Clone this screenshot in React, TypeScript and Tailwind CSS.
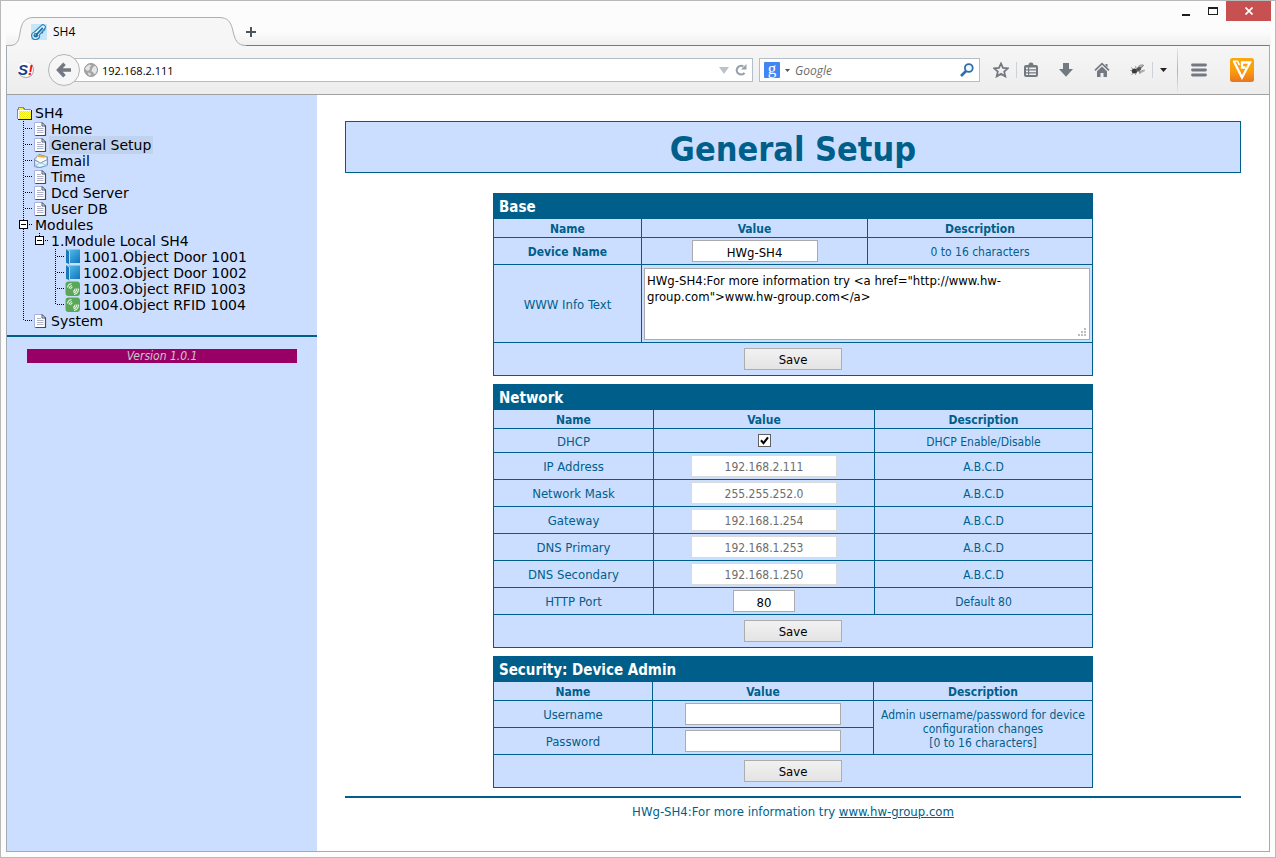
import type { ReactNode } from 'react'

/* ---------- browser chrome icons ---------- */

function ThermometerIcon() {
  return (
    <svg className="h-4 w-4 shrink-0" viewBox="0 0 16 16" aria-hidden="true">
      <rect width="16" height="16" fill="#c4e6f8" />
      <path d="M3.3 8 10.200 1.700a2.300 2.300 0 0 1 3.600 2.900L8.400 10.800a3.900 3.900 0 1 1-5.100-2.800Z" fill="#e3f3fc" stroke="#2b86bd" strokeWidth="1.200" />
      <path d="M5 11 11.800 3.800" stroke="#1b6ea6" strokeWidth="1.800" />
      <circle cx="4.800" cy="11.200" r="2.300" fill="#1b6ea6" />
      <circle cx="4.300" cy="10.700" r=".8" fill="#8cc8ea" />
      <path d="m11 9.500 1-2.500M13 6.500l1-1.500" stroke="#2b86bd" strokeWidth="1.400" />
    </svg>
  )
}

function SeznamIcon() {
  return (
    <span className="flex h-4 w-4 shrink-0 items-center justify-center rounded-full border-b border-r border-[#a8a8a8] bg-white font-['Liberation_Sans',Arial,sans-serif] text-[15px] font-bold italic leading-4">
      <span className="text-[#173f86]">S</span>
      <span className="text-[#f0101e]">!</span>
    </span>
  )
}

function GlobeIcon() {
  return (
    <svg className="h-3.5 w-3.5 shrink-0" viewBox="0 0 14 14" aria-hidden="true">
      <circle cx="7" cy="7" r="6.500" fill="#a6a6a6" stroke="#9a9a9a" strokeWidth="1" />
      <path d="M1 5.500 3 3l3-1.500 1 1.500-1.500 1.500.5 1.500L4 8 2 7ZM8 6l1.500-2.500 2-.5 1.500 3-.5 3-2 2.500L9 9 7.500 8.500Z" fill="#e6e6e6" />
      <path d="m4 9.500 2.500.5.5 2-1 1-2-1.500Z" fill="#d6d6d6" />
    </svg>
  )
}

function BackIcon() {
  return (
    <svg className="h-4 w-4" viewBox="0 0 16 16" aria-hidden="true">
      <path d="M8.500 1.800 2.600 8l5.900 6.200M3.500 8H15" fill="none" stroke="#737980" strokeWidth="3.600" />
    </svg>
  )
}

function ReloadIcon() {
  return (
    <svg className="h-3 w-3 shrink-0" viewBox="0 0 12 12" aria-hidden="true">
      <path d="M9.500 8.800A4.300 4.300 0 1 1 8.300 2.500" fill="none" stroke="#98a2ac" strokeWidth="2.200" />
      <path d="M11.500 0v5.500H6Z" fill="#98a2ac" />
    </svg>
  )
}

function MagnifierIcon() {
  return (
    <svg className="h-3.5 w-3.5" viewBox="0 0 14 14" aria-hidden="true">
      <circle cx="8.800" cy="5" r="3.900" fill="#f2f8fd" stroke="#2f6ea8" strokeWidth="1.800" />
      <path d="M6 8 1 13" stroke="#2f6ea8" strokeWidth="2.600" />
    </svg>
  )
}

function StarIcon() {
  return (
    <svg className="h-4 w-4" viewBox="0 0 16 16" aria-hidden="true">
      <path d="m8 1.500 2 4.400 4.800.5-3.600 3.200 1.100 4.800L8 11.900l-4.300 2.500 1.100-4.800L1.200 6.400 6 5.900Z" fill="none" stroke="#737980" strokeWidth="1.800" />
    </svg>
  )
}

function BookmarksListIcon() {
  return (
    <svg className="h-4 w-4" viewBox="0 0 16 16" aria-hidden="true">
      <path d="M3 3h2.500a2.500 2.500 0 0 1 5 0H13a2 2 0 0 1 2 2v8a2 2 0 0 1-2 2H3a2 2 0 0 1-2-2V5a2 2 0 0 1 2-2Z" fill="#737980" />
      <path d="M3 5.500h2v1.800H3zM6.200 5.500H13v1.800H6.200zM3 8.500h2v1.800H3zM6.200 8.500H13v1.800H6.200zM3 11.500h2V13H3zM6.200 11.500H13V13H6.200z" fill="#f1f1f1" />
    </svg>
  )
}

function DownloadIcon() {
  return (
    <svg className="h-4 w-4" viewBox="0 0 16 16" aria-hidden="true">
      <path d="M5 1h6v6h4l-7 7.800L1 7h4Z" fill="#737980" />
    </svg>
  )
}

function HomeIcon() {
  return (
    <svg className="h-4 w-4" viewBox="0 0 16 16" aria-hidden="true">
      <path d="m1 8.300 7-6.600 7 6.600" fill="none" stroke="#737980" strokeWidth="1.700" />
      <path d="M3 9.300v5.700h3.500v-4h3v4H13V9.300L8 4.600ZM11.500 2h2v3.500l-2-2Z" fill="#737980" />
    </svg>
  )
}

function FlyIcon() {
  return (
    <svg className="h-4 w-4" viewBox="0 0 16 16" aria-hidden="true">
      <path d="M6 8 9 3l4-1 .5 2L8 9.500ZM9 9l5.500-1.500.5 1.500-5 2.500Z" fill="#a8a8a8" />
      <ellipse cx="4.500" cy="9" rx="2.700" ry="2.500" fill="#3a3a3a" />
      <ellipse cx="8.500" cy="7.300" rx="3" ry="1.900" fill="#555" transform="rotate(-28 8.500 7.300)" />
      <path d="M3 7 1 5.500M3 11l-1.500 2M6 11l-.5 2M9 9l1 3M6 6 5.500 4M11 6l3-3M2 8.500H0" stroke="#777" strokeWidth=".7" />
    </svg>
  )
}

function MenuIcon() {
  return (
    <svg className="h-4 w-4" viewBox="0 0 16 16" aria-hidden="true">
      <path d="M1.500 3h13M1.500 8h13M1.500 13h13" stroke="#737980" strokeWidth="2.800" strokeLinecap="round" />
    </svg>
  )
}

function AddonIcon() {
  return (
    <svg className="h-6 w-6" viewBox="0 0 24 24" aria-hidden="true">
      <defs>
        <linearGradient id="addon" x1="0" y1="0" x2="0" y2="1">
          <stop offset="0" stopColor="#fba812" />
          <stop offset=".55" stopColor="#f99d0a" />
          <stop offset="1" stopColor="#e97424" />
        </linearGradient>
      </defs>
      <rect width="24" height="24" rx="2.500" fill="url(#addon)" />
      <path d="M4 3.500 12 19.500 20 4.500H12V9.500H15.500" fill="none" stroke="#fff" strokeWidth="2.300" />
      <path d="M3 3.200h4.500l2 4" fill="none" stroke="#fff" strokeWidth="1.600" />
    </svg>
  )
}

function TriangleDown({ className }: { className: string }) {
  return (
    <svg className={className} viewBox="0 0 10 6" preserveAspectRatio="none" aria-hidden="true">
      <path d="M0 0h10L5 6Z" fill="currentColor" />
    </svg>
  )
}

/* ---------- tree icons ---------- */

function FolderIcon() {
  return (
    <svg className="h-4 w-4 shrink-0" viewBox="0 0 16 16" shapeRendering="crispEdges" aria-hidden="true">
      <defs>
        <pattern id="hatch" width="2" height="2" patternUnits="userSpaceOnUse">
          <rect width="2" height="2" fill="#f4f3b4" />
          <path d="M0 0h1v1H0zM1 1h1v1H1z" fill="#efe916" />
        </pattern>
      </defs>
      <path d="M1 4h1V3h5v1h1v1h6v9H1Z" fill="url(#hatch)" />
      <path d="M.5 13.500V4.500h1V2.500h5v1h1v1h6" fill="none" stroke="#8a8a8a" />
      <path d="M1.500 5.500h12M1.500 5v8.500" stroke="#fff" />
      <path d="M14.500 5v9.500H1" fill="none" stroke="#222" />
    </svg>
  )
}

function DocIcon() {
  return (
    <svg className="h-4 w-4 shrink-0" viewBox="0 0 16 16" aria-hidden="true">
      <path d="M1.500 1.500h7.800l3.200 3.200v9.800h-11Z" fill="#fff" stroke="#a9b3e2" />
      <path d="M9 1.500l3.500 3.500M9 1.500V5h3.500" fill="none" stroke="#46546b" />
      <path d="M12.500 4.500v10h-10" fill="none" stroke="#3e4c63" strokeWidth="1.200" />
      <path d="M4 5.500h4M4 7.500h6.500M4 9.500h6.500M4 11.500h6.500" stroke="#aeb3c8" />
    </svg>
  )
}

function MailIcon() {
  return (
    <svg className="h-4 w-4 shrink-0" viewBox="0 0 16 16" aria-hidden="true">
      <path d="M1.500 6 6 1.500 14.500 4v8L7 14.500l-5.500-1Z" fill="#c9d3ee" stroke="#7c86bb" />
      <path d="M3 6.500 5 2.500l7.500 1 .5 3.500-5 3Z" fill="#fffbe6" />
      <path d="M4.500 4 5.500 2l7 1-.5 1.800Z" fill="#e5b040" />
      <path d="M1.500 7 7.500 10 14.500 6.500 14 12.500 7 14.500 2 13.500Z" fill="#dff6fc" stroke="#8291c6" />
      <path d="M2 13.500 7 9.500l7 3" fill="none" stroke="#86cfe3" />
    </svg>
  )
}

function DoorIcon() {
  return (
    <svg className="h-4 w-4 shrink-0" viewBox="0 0 16 16" aria-hidden="true">
      <defs>
        <linearGradient id="door" x1="0" y1="0" x2="1" y2="1">
          <stop offset="0" stopColor="#58c4f0" />
          <stop offset="1" stopColor="#0f75bc" />
        </linearGradient>
      </defs>
      <path d="M1 .5h14V14H1Z" fill="url(#door)" />
      <path d="M1 .5 4.500 2v13.500L1 13.500Z" fill="#1c78b8" />
      <path d="M2.500 1 4.500 2v13" fill="none" stroke="#a9dcf4" />
    </svg>
  )
}

function RfidIcon() {
  return (
    <svg className="h-4 w-4 shrink-0" viewBox="0 0 16 16" aria-hidden="true">
      <rect x=".5" y=".5" width="14.500" height="14.500" rx="3" fill="#58a858" />
      <path d="M2.500 6.500Q3 3 6.500 2.500M4 7.500Q4.500 5 7 4.500M5.500 8q.5-1.500 2-2M13.500 7.500q0 5-4.500 6M11.800 7.500q0 3.500-3.300 4.300M10.200 7.500q0 2-2.200 2.800" fill="none" stroke="#e6f6e2" strokeWidth="1.100" />
    </svg>
  )
}

type Line = 'bar' | 'tee' | 'last' | 'minus' | 'minusEnd' | 'gap'

function TreeLine({ kind }: { kind: Line }) {
  const boxed = kind === 'minus' || kind === 'minusEnd'
  return (
    <svg className="h-4 w-4 shrink-0" viewBox="0 0 16 16" shapeRendering="crispEdges" aria-hidden="true">
      <g fill="none" stroke="#000" strokeDasharray="1 1">
        {(kind === 'bar' || kind === 'tee' || kind === 'minus') && <path d="M6.500 0V16" />}
        {(kind === 'last' || kind === 'minusEnd') && <path d="M6.500 0V8" />}
        {kind !== 'bar' && kind !== 'gap' && <path d="M8 7.500H15" />}
      </g>
      {boxed && (
        <g>
          <rect x="2.500" y="3.500" width="8" height="8" fill="#fff" stroke="#000" />
          <path d="M4 7.500h5" stroke="#000" />
        </g>
      )}
    </svg>
  )
}

interface Node {
  label: string
  lines: Line[]
  icon?: ReactNode
  current?: boolean
}

const nodes: Node[] = [
  { label: 'SH4', lines: [], icon: <FolderIcon /> },
  { label: 'Home', lines: ['tee'], icon: <DocIcon /> },
  { label: 'General Setup', lines: ['tee'], icon: <DocIcon />, current: true },
  { label: 'Email', lines: ['tee'], icon: <MailIcon /> },
  { label: 'Time', lines: ['tee'], icon: <DocIcon /> },
  { label: 'Dcd Server', lines: ['tee'], icon: <DocIcon /> },
  { label: 'User DB', lines: ['tee'], icon: <DocIcon /> },
  { label: 'Modules', lines: ['minus'] },
  { label: '1.Module Local SH4', lines: ['bar', 'minusEnd'] },
  { label: '1001.Object Door 1001', lines: ['bar', 'gap', 'tee'], icon: <DoorIcon /> },
  { label: '1002.Object Door 1002', lines: ['bar', 'gap', 'tee'], icon: <DoorIcon /> },
  { label: '1003.Object RFID 1003', lines: ['bar', 'gap', 'tee'], icon: <RfidIcon /> },
  { label: '1004.Object RFID 1004', lines: ['bar', 'gap', 'last'], icon: <RfidIcon /> },
  { label: 'System', lines: ['last'], icon: <DocIcon /> },
]

function Sidebar() {
  return (
    <aside className="w-[310px] shrink-0 bg-[#ccdeff] pt-2.5 font-['DejaVu_Sans',Verdana,sans-serif]">
      <nav aria-label="Device">
        <ul className="px-2.5 text-sm text-black">
          {nodes.map((node) => (
            <li key={node.label} className="flex h-4 items-center">
              {node.lines.map((kind, i) => (
                <TreeLine key={i} kind={kind} />
              ))}
              {node.icon}
              <a href="#" className={node.current ? 'bg-[#c0d2ec] px-0.5 leading-[18px]' : 'px-0.5 leading-4'}>
                {node.label}
              </a>
            </li>
          ))}
        </ul>
      </nav>
      <div className="mt-1.5 border-t-2 border-[#005f8a] px-5 pt-3">
        <p className="bg-[#990066] text-center font-['DejaVu_Sans_Condensed','DejaVu_Sans',sans-serif] text-xs italic leading-[14px] text-[#c8c8c8]">
          Version 1.0.1
        </p>
      </div>
    </aside>
  )
}

/* ---------- form tables ---------- */

const cell = 'border border-[#005f8a] p-0 text-center align-middle'
const textCell = 'border border-[#005f8a] px-0 pt-0.5 pb-0 text-center align-middle'
const nameCell = 'border border-[#005f8a] px-0 pt-0.5 pb-0 text-center align-middle text-[13px]'
const field = 'border border-[#ababab] bg-white pt-0.5 text-center text-[13px] text-black'

function Panel({ title, cols, children }: { title: string; cols: ReactNode; children: ReactNode }) {
  return (
    <form onSubmit={(e) => e.preventDefault()}>
      <table className="w-full table-fixed border-collapse border border-[#005f8a] bg-[#ccdeff] text-xs leading-[14px] text-[#005f8a]">
        {cols}
        <thead>
          <tr className="h-[25px]">
            <th colSpan={3} className="border border-[#005f8a] bg-[#005f8a] px-[5px] pb-0 pt-0.5 text-left text-[15px] leading-5 text-white">
              {title}
            </th>
          </tr>
          <tr className="h-[19px]">
            <th className={textCell}>Name</th>
            <th className={textCell}>Value</th>
            <th className={textCell}>Description</th>
          </tr>
        </thead>
        <tbody>
          {children}
          <tr className="h-[33px]">
            <td colSpan={3} className={cell}>
              <button
                type="submit"
                className="mx-auto block h-[22px] w-[98px] border border-[#adadad] bg-linear-to-b from-[#f1f1f1] to-[#e4e4e4] pt-0.5 text-[13px] text-black"
              >
                Save
              </button>
            </td>
          </tr>
        </tbody>
      </table>
    </form>
  )
}

const addresses = [
  { id: 'ip', label: 'IP Address', value: '192.168.2.111' },
  { id: 'mask', label: 'Network Mask', value: '255.255.252.0' },
  { id: 'gateway', label: 'Gateway', value: '192.168.1.254' },
  { id: 'dns1', label: 'DNS Primary', value: '192.168.1.253' },
  { id: 'dns2', label: 'DNS Secondary', value: '192.168.1.250' },
]

function BasePanel() {
  return (
    <Panel
      title="Base"
      cols={
        <colgroup>
          <col className="w-[148px]" />
          <col className="w-[226px]" />
          <col />
        </colgroup>
      }
    >
      <tr className="h-[27px]">
        <td className={textCell}>
          <label htmlFor="device" className="font-bold">Device Name</label>
        </td>
        <td className={cell}>
          <input id="device" type="text" defaultValue="HWg-SH4" className={`${field} mx-auto block h-[22px] w-[126px]`} />
        </td>
        <td className={textCell}>0 to 16 characters</td>
      </tr>
      <tr className="h-[78px]">
        <td className={nameCell}>
          <label htmlFor="info">WWW Info Text</label>
        </td>
        <td colSpan={2} className={cell}>
          <div className="relative mx-0.5">
            <textarea
              id="info"
              className="block h-[72px] w-full resize-none border border-[#ababab] bg-white px-0.5 py-1 text-[13px] leading-4 text-black"
              defaultValue={'HWg-SH4:For more information try <a href="http://www.hw-group.com">www.hw-group.com</a>'}
            />
            <svg className="absolute bottom-1 right-1 h-2 w-2" viewBox="0 0 8 8" shapeRendering="crispEdges" aria-hidden="true">
              <path d="M6 0h2v2H6zM3 3h2v2H3zM6 3h2v2H6zM0 6h2v2H0zM3 6h2v2H3zM6 6h2v2H6z" fill="#bdbdbd" />
            </svg>
          </div>
        </td>
      </tr>
    </Panel>
  )
}

function NetworkPanel() {
  return (
    <Panel
      title="Network"
      cols={
        <colgroup>
          <col className="w-[160px]" />
          <col className="w-[221px]" />
          <col />
        </colgroup>
      }
    >
      <tr className="h-6">
        <td className={nameCell}>
          <label htmlFor="dhcp">DHCP</label>
        </td>
        <td className={cell}>
          <span className="relative mx-auto block h-[13px] w-[13px]">
            <input
              id="dhcp"
              type="checkbox"
              defaultChecked
              className="peer block h-[13px] w-[13px] appearance-none border border-[#5f5f5f] bg-white"
            />
            <svg
              className="pointer-events-none absolute inset-0 hidden h-[13px] w-[13px] peer-checked:block"
              viewBox="0 0 13 13"
              aria-hidden="true"
            >
              <path d="m3 6.300 2.500 2.900L10 3.300" fill="none" stroke="#000" strokeWidth="2.100" />
            </svg>
          </span>
        </td>
        <td className={textCell}>DHCP Enable/Disable</td>
      </tr>
      {addresses.map((a) => (
        <tr key={a.id} className="h-[27px]">
          <td className={nameCell}>
            <label htmlFor={a.id}>{a.label}</label>
          </td>
          <td className={cell}>
            <input
              id={a.id}
              type="text"
              disabled
              defaultValue={a.value}
              className="mx-auto block h-[22px] w-[146px] border border-[#d9d9d9] bg-white pt-0.5 text-center text-xs text-[#6d6d6d]"
            />
          </td>
          <td className={textCell}>A.B.C.D</td>
        </tr>
      ))}
      <tr className="h-[27px]">
        <td className={nameCell}>
          <label htmlFor="port">HTTP Port</label>
        </td>
        <td className={cell}>
          <input id="port" type="text" defaultValue="80" className={`${field} mx-auto block h-[22px] w-[62px]`} />
        </td>
        <td className={textCell}>Default 80</td>
      </tr>
    </Panel>
  )
}

function SecurityPanel() {
  return (
    <Panel
      title="Security: Device Admin"
      cols={
        <colgroup>
          <col className="w-[159px]" />
          <col className="w-[221px]" />
          <col />
        </colgroup>
      }
    >
      <tr className="h-[27px]">
        <td className={nameCell}>
          <label htmlFor="user">Username</label>
        </td>
        <td className={cell}>
          <input id="user" type="text" className={`${field} mx-auto block h-[22px] w-[156px]`} />
        </td>
        <td rowSpan={2} className={textCell}>
          Admin username/password for device configuration changes
          <br />
          [0 to 16 characters]
        </td>
      </tr>
      <tr className="h-[27px]">
        <td className={nameCell}>
          <label htmlFor="pass">Password</label>
        </td>
        <td className={cell}>
          <input id="pass" type="password" className={`${field} mx-auto block h-[22px] w-[156px]`} />
        </td>
      </tr>
    </Panel>
  )
}

/* ---------- window ---------- */

function TitleBar() {
  return (
    <header className="-mr-px flex h-11 items-start justify-between bg-linear-to-b from-[#fcfcfc] from-70% to-[#f0f0f0]">
      <div className="flex h-11 items-end">
        <div className="relative h-7 w-[238px]">
          <svg className="absolute left-0 top-0 h-[29px] w-[240px]" viewBox="0 0 240 29" aria-hidden="true">
            <path
              d="M0 28.500H4C12 28.500 13 22 14 16 15.500 5 19 .5 28 .5H213C222 .5 225 5 227 14 229 23 231 28.500 240 28.500V29H0Z"
              fill="#f6f6f6"
            />
            <path
              d="M0 28.500H4C12 28.500 13 22 14 16 15.500 5 19 .5 28 .5H213C222 .5 225 5 227 14 229 23 231 28.500 240 28.500"
              fill="none"
              stroke="#a9b0b8"
            />
          </svg>
          <div className="relative flex h-full items-center gap-1.5 pl-[25px] pt-0.5 text-xs text-black">
            <ThermometerIcon />
            <span>SH4</span>
          </div>
        </div>
        <button type="button" aria-label="New tab" className="flex h-[26px] w-3 items-center justify-end">
          <svg className="h-2.5 w-2.5" viewBox="0 0 10 10" aria-hidden="true">
            <path d="M5 0v10M0 5h10" stroke="#4a5562" strokeWidth="2" />
          </svg>
        </button>
      </div>
      <div className="flex h-5 items-center">
        <button type="button" aria-label="Minimize" className="flex h-5 w-7 items-center justify-center">
          <svg className="h-3 w-3" viewBox="0 0 12 12" shapeRendering="crispEdges" aria-hidden="true">
            <path d="M2 9h8v2H2z" fill="#1e1e1e" />
          </svg>
        </button>
        <button type="button" aria-label="Maximize" className="flex h-5 w-[26px] items-center justify-center">
          <svg className="h-2 w-2.5" viewBox="0 0 10 8" shapeRendering="crispEdges" aria-hidden="true">
            <path d="M0 0h10v8H0zM1 2v5h8V2z" fill="#1e1e1e" fillRule="evenodd" />
          </svg>
        </button>
        <button type="button" aria-label="Close" className="flex h-5 w-[45px] items-center justify-center bg-[#c75050]">
          <svg className="h-2 w-2" viewBox="0 0 8 8" aria-hidden="true">
            <path d="m.5.5 7 7M7.500.5l-7 7" stroke="#fff" strokeWidth="1.700" />
          </svg>
        </button>
      </div>
    </header>
  )
}

function ToolButton({ label, width, children }: { label: string; width: string; children: ReactNode }) {
  return (
    <button type="button" aria-label={label} className={`flex h-6 shrink-0 items-center justify-center ${width}`}>
      {children}
    </button>
  )
}

function Toolbar() {
  return (
    <div className="flex h-[49px] items-center border-b border-[#a0a0a0] bg-linear-to-b from-[#f6f6f6] to-[#ededed] pl-[11px] pr-[15px] text-[11px] text-black">
      <SeznamIcon />
      <div className="ml-3.5 flex min-w-0 flex-1 items-center">
        <button
          type="button"
          aria-label="Back"
          className="relative flex h-8 w-8 shrink-0 items-center justify-center rounded-full border border-[#b4b4b4] bg-[#f6f6f6]"
        >
          <BackIcon />
        </button>
        <div className="-ml-1.5 flex h-6 min-w-0 flex-1 items-center gap-1 border border-[#b4bec8] bg-white pl-[9px] pr-[5px]">
          <GlobeIcon />
          <input type="text" aria-label="Address" defaultValue="192.168.2.111" className="h-5 min-w-0 flex-1" />
          <TriangleDown className="mr-0.5 h-[7px] w-2.5 shrink-0 text-[#bcc2c9]" />
          <ReloadIcon />
        </div>
      </div>
      <div className="ml-1.5 flex h-6 w-[221px] shrink-0 items-center gap-[5px] border border-[#b4bec8] bg-white pl-1 pr-[5px]">
        <span className="flex h-4 w-4 shrink-0 items-center justify-center rounded-[1px] bg-[#4285f4] pb-0.5 font-['Liberation_Serif',serif] text-[17px] leading-4 text-white">
          g
        </span>
        <TriangleDown className="h-[3px] w-[5px] shrink-0 text-[#555]" />
        <input
          type="text"
          aria-label="Search"
          placeholder="Google"
          className="h-5 min-w-0 flex-1 text-xs italic placeholder:text-[#6b6b6b]"
        />
        <MagnifierIcon />
      </div>
      <div className="ml-1.5 flex shrink-0 items-center">
        <ToolButton label="Bookmark" width="w-[30px]"><StarIcon /></ToolButton>
        <span className="h-4 w-px bg-[#ccd2d8]" />
        <ToolButton label="Bookmarks list" width="w-7"><BookmarksListIcon /></ToolButton>
        <ToolButton label="Downloads" width="w-[42px]"><DownloadIcon /></ToolButton>
        <ToolButton label="Home" width="w-[30px]"><HomeIcon /></ToolButton>
        <span className="w-[7px]" />
        <ToolButton label="Firebug" width="w-7"><FlyIcon /></ToolButton>
        <span className="h-4 w-px bg-[#ccd2d8]" />
        <ToolButton label="More" width="w-5"><TriangleDown className="h-1 w-[7px] text-[#222]" /></ToolButton>
        <span className="ml-1 h-11 w-px bg-linear-to-b from-[#e4e7ea] via-[#aab4be] to-[#e4e7ea]" />
        <ToolButton label="Menu" width="w-[42px]"><MenuIcon /></ToolButton>
        <span className="w-2.5" />
        <ToolButton label="Add-on" width="w-6"><AddonIcon /></ToolButton>
      </div>
    </div>
  )
}

export default function App() {
  return (
    <div className="flex min-h-screen flex-col border border-[#b9b9b9] bg-[#fcfcfc] px-[5px] pb-[5px] font-['Open_Sans','Noto_Sans',sans-serif]">
      <TitleBar />
      <div className="flex flex-1 flex-col border border-[#a5aab0] border-t-[#6f7c89] bg-white">
        <Toolbar />
        <div className="flex flex-1">
          <Sidebar />
          <main className="min-w-0 flex-1 px-7 pt-[26px] font-['DejaVu_Sans_Condensed','DejaVu_Sans',Tahoma,sans-serif]">
            <h1 className="border border-[#005f8a] bg-[#ccdeff] pb-0.5 pt-1.5 text-center text-[34px] font-bold leading-[42px] text-[#005f8a]">
              General Setup
            </h1>
            <div className="mx-auto mt-5 flex max-w-[600px] flex-col gap-2">
              <BasePanel />
              <NetworkPanel />
              <SecurityPanel />
            </div>
            <footer className="mt-2 border-t-2 border-[#005f8a] pt-1.5 text-center text-[13px] leading-4 text-[#005f8a]">
              HWg-SH4:For more information try{' '}
              <a href="http://www.hw-group.com" className="underline">www.hw-group.com</a>
            </footer>
          </main>
        </div>
      </div>
    </div>
  )
}
